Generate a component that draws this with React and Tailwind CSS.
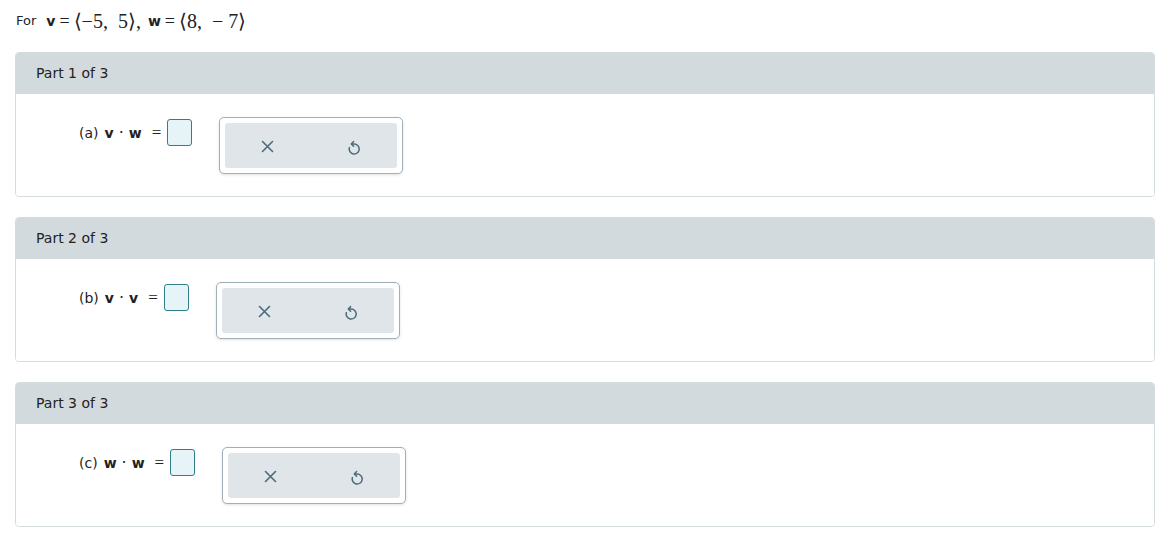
import React from "react";

const serif = { fontFamily: '"Liberation Serif", serif' };

function XIcon() {
  return (
    <svg width="13" height="13" viewBox="0 0 13 13" fill="none">
      <path d="M1.5 1.5 L11.5 11.5 M11.5 1.5 L1.5 11.5" stroke="#4b6b78" strokeWidth="1.6" strokeLinecap="round" />
    </svg>
  );
}

function UndoIcon() {
  return (
    <svg width="14" height="16" viewBox="0 0 14 16" fill="none">
      <path d="M2.4 8.6 A5 5 0 1 0 7.2 5 L4.6 5" stroke="#4b6b78" strokeWidth="1.5" strokeLinecap="round" strokeLinejoin="round" />
      <path d="M6.6 2.6 L4.3 5 L6.6 7.2" stroke="#4b6b78" strokeWidth="1.5" strokeLinecap="round" strokeLinejoin="round" />
    </svg>
  );
}

function Part({ n, label, a, b }) {
  return (
    <div className="border border-[#d5dcdf] rounded-[4px] overflow-hidden">
      <div className="h-[41px] bg-[#d2dadd] flex items-center pl-[20px] text-[14px] text-[#222]">
        Part {n} of 3
      </div>
      <div className="h-[102px] bg-white pl-[63px] pt-[24px]">
        <div className="flex items-start">
          <div className="flex items-center h-[28px] text-[14px] text-[#222]">
            <span className="mt-[2px]">({label})</span>
            <b className="ml-[6px] mt-[2px] font-bold">{a}</b>
            <span className="mx-[5px] mt-[2px] text-[16px] leading-none">·</span>
            <b className="font-bold mt-[2px]">{b}</b>
            <span className="ml-[10px] mr-[6px] mt-[2px] text-[17px]" style={serif}>=</span>
            <div className="w-[25px] h-[27px] border border-[#2e7f8b] rounded-[3px] bg-[#e6f4f8]" />
          </div>
          <div className="ml-[27px] mt-[-1px] w-[184px] h-[57px] border border-[#9fb0b8] rounded-[5px] bg-white p-[5px] shadow-[0_1px_3px_rgba(0,0,0,0.12)]">
            <div className="w-full h-full bg-[#dfe5e8] rounded-[3px] flex items-center">
              <div className="w-[84px] flex justify-center pl-[1px] mt-[2px]"><XIcon /></div>
              <div className="w-[88px] flex justify-center pl-[2px] mt-[2px]"><UndoIcon /></div>
            </div>
          </div>
        </div>
      </div>
    </div>
  );
}

export default function App() {
  return (
    <div className="bg-white min-h-[535px] px-[15px] pr-[17px]" style={{ fontFamily: '"DejaVu Sans", Verdana, sans-serif' }}>
      <div className="h-[42px] flex items-center pl-[1px] text-[13px] text-[#222]">
        <span>For</span>
        <b className="ml-[10px] text-[14px] font-bold">v</b>
        <span className="mx-[4px] text-[18px]" style={serif}>=</span>
        <span className="text-[20px]" style={serif}>⟨−5,&nbsp; 5⟩,</span>
        <b className="ml-[7px] text-[14px] font-bold">w</b>
        <span className="mx-[4px] text-[18px]" style={serif}>=</span>
        <span className="text-[20px]" style={serif}>⟨8,&nbsp; − 7⟩</span>
      </div>
      <div className="mt-[10px] flex flex-col gap-[20px]">
        <Part n={1} label="a" a="v" b="w" />
        <Part n={2} label="b" a="v" b="v" />
        <Part n={3} label="c" a="w" b="w" />
      </div>
    </div>
  );
}
